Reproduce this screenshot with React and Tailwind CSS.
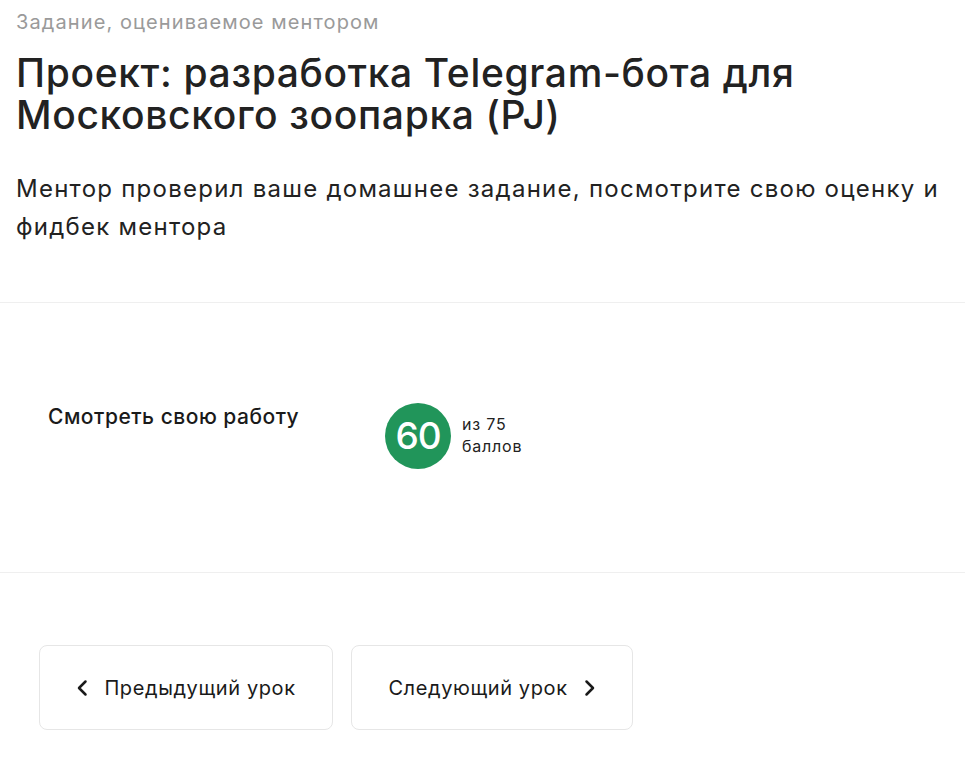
import React from "react";

function ChevronLeft() {
  return (
    <svg width="12" height="18" viewBox="0 0 12 18" fill="none">
      <path d="M9.5 2.5L3 9L9.5 15.5" stroke="#1a1a1a" strokeWidth="2.5" strokeLinecap="round" strokeLinejoin="round" />
    </svg>
  );
}
function ChevronRight() {
  return (
    <svg width="12" height="18" viewBox="0 0 12 18" fill="none">
      <path d="M2.5 2.5L9 9L2.5 15.5" stroke="#1a1a1a" strokeWidth="2.5" strokeLinecap="round" strokeLinejoin="round" />
    </svg>
  );
}

export default function App() {
  return (
    <div className="w-[965px] h-[767px] overflow-hidden bg-white text-[#1f1f1f]" style={{ fontFamily: "Inter, 'Noto Sans', sans-serif" }}>
      <div className="px-4 pt-[10px]">
        <div className="text-[20px] leading-6 text-[#9a9a9a] tracking-[1.1px]">Задание, оцениваемое ментором</div>
        <h1 className="mt-[18px] text-[39px] leading-[42px] font-medium text-[#222] tracking-[0.65px]">
          Проект: разработка Telegram-бота для
          <br />
          Московского зоопарка (PJ)
        </h1>
        <p className="mt-[34px] text-[24px] leading-[38px] text-[#222] tracking-[1.25px]">
          Ментор проверил ваше домашнее задание, посмотрите свою оценку и
          <br />
          фидбек ментора
        </p>
      </div>
      <div className="mt-[56px] border-t border-[#efefef] h-[270px] flex pl-[48px] pt-[100px]">
        <div className="w-[337px] text-[21px] leading-7 font-medium text-[#1a1a1a] tracking-[0.5px]">Смотреть свою работу</div>
        <div className="flex items-start">
          <div className="w-[66px] h-[66px] rounded-full bg-[#21955a] flex items-center justify-center text-white text-[37px] font-medium tracking-[-1px]">60</div>
          <div className="ml-[11px] mt-[10px] text-[16px] leading-[22px] text-[#222] tracking-[0.8px]">
            из 75
            <br />
            баллов
          </div>
        </div>
      </div>
      <div className="border-t border-[#efefef] flex gap-[18px] pl-[39px] pt-[72px]">
        <button className="w-[294px] h-[85px] rounded-lg border border-[#e6e6e6] bg-white flex items-center justify-center gap-[16px] text-[20px] text-[#1a1a1a] tracking-[0.6px]">
          <ChevronLeft />
          <span>Предыдущий урок</span>
        </button>
        <button className="w-[282px] h-[85px] rounded-lg border border-[#e6e6e6] bg-white flex items-center justify-center gap-[16px] text-[20px] text-[#1a1a1a] tracking-[0.6px]">
          <span>Следующий урок</span>
          <ChevronRight />
        </button>
      </div>
    </div>
  );
}
